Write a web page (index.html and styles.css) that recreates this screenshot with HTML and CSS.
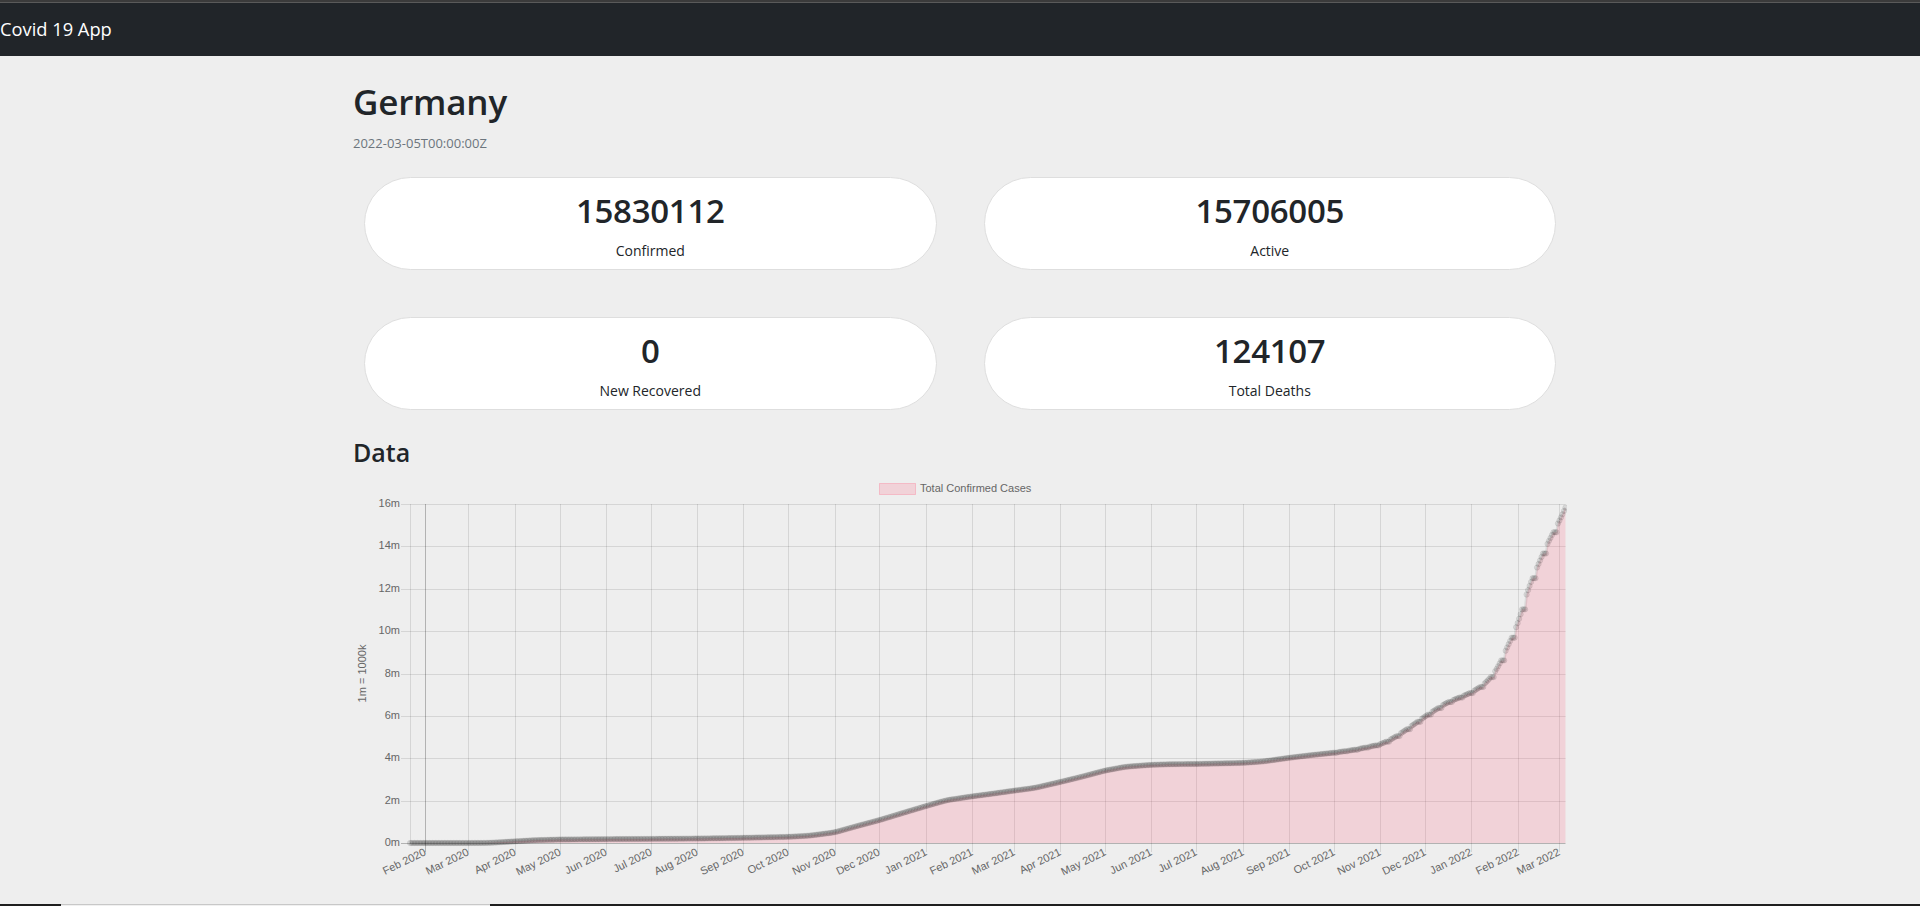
FILE: index.html
```html
<!DOCTYPE html>
<html lang="en">
<head>
<meta charset="utf-8">
<title>Covid 19 App</title>
<link rel="stylesheet" href="styles.css">
</head>
<body>
<div class="topline"></div>
<nav class="navbar">
  <a class="brand" href="#">Covid 19 App</a>
</nav>
<main class="container">
  <h1 class="country">Germany</h1>
  <div class="date">2022-03-05T00:00:00Z</div>
  <section class="stats">
    <div class="stat">
      <div class="stat-value">15830112</div>
      <div class="stat-label">Confirmed</div>
    </div>
    <div class="stat">
      <div class="stat-value">15706005</div>
      <div class="stat-label">Active</div>
    </div>
    <div class="stat">
      <div class="stat-value">0</div>
      <div class="stat-label">New Recovered</div>
    </div>
    <div class="stat">
      <div class="stat-value">124107</div>
      <div class="stat-label">Total Deaths</div>
    </div>
  </section>
  <h3 class="section-title">Data</h3>
  <svg id="chart" class="chart" width="1214" height="428" viewBox="0 0 1214 428"></svg>
</main>
<div class="taskbar">
  <span class="tb-dark tb-start"></span>
  <span class="tb-light"></span>
  <span class="tb-dark tb-rest"></span>
</div>
<script src="script.js"></script>
</body>
</html>
```
FILE: styles.css
```css
* { box-sizing: border-box; }
html, body { margin: 0; padding: 0; }
body {
  background: #eeeeee;
  font-family: "Open Sans", "Noto Sans", sans-serif;
  color: #212529;
}
.topline {
  height: 3px;
  background: linear-gradient(#3b3b3b 0 2px, #5a5a5a 2px 3px);
}
.navbar {
  height: 53px;
  background: #212529;
  display: flex;
  align-items: center;
}
.brand {
  color: #ffffff;
  font-size: 18.3px;
  line-height: 1;
  text-decoration: none;
}
.container {
  width: 1214px;
  margin: 0 auto;
}
.country {
  font-size: 35px;
  font-weight: 600;
  line-height: 1.2;
  margin: 25px 0 0;
  letter-spacing: -0.2px;
}
.date {
  font-size: 13px;
  line-height: 1.5;
  color: #6c757d;
  margin-top: 10.5px;
}
.stats {
  display: grid;
  grid-template-columns: 1fr 1fr;
  column-gap: 47px;
  row-gap: 47px;
  padding: 0 11px;
  margin-top: 24px;
}
.stat {
  background: #ffffff;
  border: 1px solid #dedede;
  border-radius: 50px;
  height: 93px;
  text-align: center;
  padding-top: 13px;
}
.stat-value {
  font-size: 33px;
  font-weight: 600;
  line-height: 1.2;
  letter-spacing: -0.3px;
}
.stat-label {
  font-size: 14px;
  line-height: 1.5;
  margin-top: 9px;
}
.section-title {
  font-size: 25px;
  font-weight: 600;
  line-height: 1.2;
  margin: 27px 0 0;
}
.chart {
  display: block;
  width: 1214px;
  height: 428px;
  margin-top: 7px;
  font-family: "Liberation Sans", Arial, sans-serif;
  font-size: 11px;
}
.chart text { fill: #666666; }
.taskbar {
  position: fixed;
  left: 0;
  right: 0;
  bottom: 0;
  height: 2px;
  display: flex;
}
.tb-dark { background: #1f1f1f; }
.tb-start { width: 61px; }
.tb-light { width: 429px; background: #f0f0f0; border-top: 1px solid #c8c8c8; }
.tb-rest { flex: 1; }
```
FILE: script.js
```js
(function () {
  var svg = document.getElementById('chart');
  var NS = 'http://www.w3.org/2000/svg';
  var L = 57, R = 1212.5, T = 30, B = 369;
  var X0 = 72, PXD = 1.4947;
  var PXM = (B - T) / 16;
  var base = Date.UTC(2020, 1, 1);
  function day(s) {
    var p = s.split('-').map(Number);
    return Math.round((Date.UTC(p[0], p[1] - 1, p[2]) - base) / 86400000);
  }
  function xOf(d) { return X0 + d * PXD; }
  function yOf(v) { return B - v * PXM; }
  function el(name, attrs, text, parent) {
    var e = document.createElementNS(NS, name);
    for (var k in attrs) e.setAttribute(k, attrs[k]);
    if (text != null) e.textContent = text;
    (parent || svg).appendChild(e);
    return e;
  }
  var grid = 'rgba(0,0,0,0.1)', zero = 'rgba(0,0,0,0.25)';

  // legend
  el('rect', { x: 526.5, y: 9.5, width: 36, height: 11, fill: 'rgba(255,99,132,0.2)', stroke: 'rgba(255,99,132,0.3)', 'stroke-width': 1 });
  el('text', { x: 567, y: 15, 'dominant-baseline': 'middle' }, 'Total Confirmed Cases');

  // y axis title
  el('text', { x: 0, y: 0, 'text-anchor': 'middle', 'dominant-baseline': 'middle', transform: 'translate(10.5,199.5) rotate(-90)' }, '1m = 1000k');

  // horizontal grid + y labels
  for (var i = 0; i <= 8; i++) {
    var v = i * 2;
    var y = Math.round(yOf(v)) + 0.5;
    el('line', { x1: 48, x2: R, y1: y, y2: y, stroke: v === 0 ? zero : grid, 'stroke-width': 1 });
    el('text', { x: 47, y: y, 'text-anchor': 'end', 'dominant-baseline': 'middle' }, v + 'm');
  }
  // left border
  el('line', { x1: L + 0.5, x2: L + 0.5, y1: T, y2: B + 0.5, stroke: grid, 'stroke-width': 1 });

  // vertical grid + x labels
  var months = ['Jan', 'Feb', 'Mar', 'Apr', 'May', 'Jun', 'Jul', 'Aug', 'Sep', 'Oct', 'Nov', 'Dec'];
  var idx = 0;
  for (var yr = 2020; yr <= 2022; yr++) {
    for (var m = 0; m < 12; m++) {
      if (yr === 2020 && m < 1) continue;
      if (yr === 2022 && m > 2) break;
      var d = Math.round((Date.UTC(yr, m, 1) - base) / 86400000);
      var x = Math.round(xOf(d)) + 0.5;
      el('line', { x1: x, x2: x, y1: T, y2: B + 9, stroke: idx === 0 ? zero : grid, 'stroke-width': 1 });
      el('text', { x: 0, y: 0, 'text-anchor': 'end', 'dominant-baseline': 'middle', transform: 'translate(' + x + ',378) rotate(-26)' }, months[m] + ' ' + yr);
      idx++;
    }
  }

  // data
  var keys = [
    ['2020-01-22', 0], ['2020-03-01', 0.0001], ['2020-03-15', 0.006], ['2020-04-01', 0.077],
    ['2020-04-15', 0.135], ['2020-05-01', 0.164], ['2020-06-01', 0.183], ['2020-07-01', 0.195],
    ['2020-08-01', 0.21], ['2020-09-01', 0.244], ['2020-10-01', 0.29], ['2020-10-15', 0.345],
    ['2020-11-01', 0.5], ['2020-11-15', 0.78], ['2020-12-01', 1.08], ['2020-12-15', 1.38],
    ['2021-01-01', 1.74], ['2021-01-15', 2.02], ['2021-02-01', 2.2], ['2021-02-15', 2.33],
    ['2021-03-01', 2.47], ['2021-03-15', 2.6], ['2021-04-01', 2.88], ['2021-04-15', 3.12],
    ['2021-05-01', 3.42], ['2021-05-15', 3.6], ['2021-06-01', 3.69], ['2021-06-15', 3.72],
    ['2021-07-01', 3.73], ['2021-08-01', 3.78], ['2021-08-15', 3.85], ['2021-09-01', 4.02],
    ['2021-09-15', 4.14], ['2021-10-01', 4.26], ['2021-10-15', 4.4], ['2021-11-01', 4.65],
    ['2021-11-10', 4.95], ['2021-11-20', 5.42], ['2021-12-01', 5.97], ['2021-12-15', 6.6],
    ['2022-01-01', 7.1], ['2022-01-10', 7.5], ['2022-01-18', 8.16], ['2022-02-01', 10.3],
    ['2022-02-08', 12.0], ['2022-02-20', 14.0], ['2022-03-01', 15.2], ['2022-03-05', 15.830112]
  ];
  var kd = keys.map(function (k) { return day(k[0]); });
  var first = kd[0], last = kd[kd.length - 1];
  var raw = [];
  for (var dd = first; dd <= last; dd++) {
    var j = 0;
    while (j < kd.length - 2 && kd[j + 1] < dd) j++;
    var t = (dd - kd[j]) / (kd[j + 1] - kd[j]);
    raw.push(keys[j][1] + t * (keys[j + 1][1] - keys[j][1]));
  }
  var smooth = raw.map(function (v, n) {
    if (n < 3 || n > raw.length - 4) return v;
    var s = 0;
    for (var q = -3; q <= 3; q++) s += raw[n + q];
    return s / 7;
  });
  var flatFrom = day('2021-10-01');
  var vals = smooth.map(function (v, n) {
    var dd = first + n;
    if (dd < flatFrom || n === smooth.length - 1) return v;
    var dow = ((6 + dd) % 7 + 7) % 7;
    if (dow === 6) return smooth[n - 1];
    if (dow === 0) return smooth[n - 2];
    return v;
  });

  var pts = vals.map(function (v, n) { return [xOf(first + n), yOf(v)]; });
  var dArea = 'M' + pts[0][0].toFixed(2) + ',' + B;
  var dLine = '';
  pts.forEach(function (p, n) {
    dArea += 'L' + p[0].toFixed(2) + ',' + p[1].toFixed(2);
    dLine += (n ? 'L' : 'M') + p[0].toFixed(2) + ',' + p[1].toFixed(2);
  });
  dArea += 'L' + pts[pts.length - 1][0].toFixed(2) + ',' + B + 'Z';
  el('path', { d: dArea, fill: 'rgba(255,99,132,0.2)' });
  el('path', { d: dLine, fill: 'none', stroke: 'rgba(0,0,0,0.08)', 'stroke-width': 2.7 });
  var g = el('g', { fill: 'rgba(0,0,0,0.09)', stroke: 'rgba(0,0,0,0.09)', 'stroke-width': 0.9 });
  pts.forEach(function (p) {
    el('circle', { cx: p[0].toFixed(2), cy: p[1].toFixed(2), r: 2.7 }, null, g);
  });
})();
```
